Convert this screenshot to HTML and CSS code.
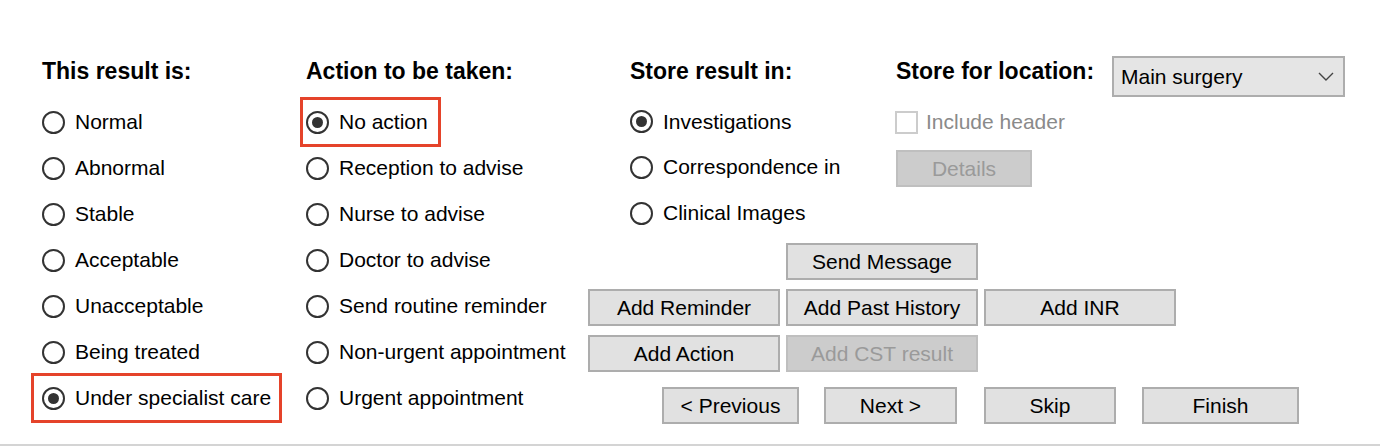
FILE: index.html
```html
<!DOCTYPE html>
<html>
<head>
<meta charset="utf-8">
<title>Result filing</title>
<link rel="stylesheet" href="styles.css">
</head>
<body>
<div class="dialog">
  <div class="col col-result">
    <div class="heading">This result is:</div>
    <label class="radio"><span class="dot"></span>Normal</label>
    <label class="radio"><span class="dot"></span>Abnormal</label>
    <label class="radio"><span class="dot"></span>Stable</label>
    <label class="radio"><span class="dot"></span>Acceptable</label>
    <label class="radio"><span class="dot"></span>Unacceptable</label>
    <label class="radio"><span class="dot"></span>Being treated</label>
    <label class="radio checked hl hl-specialist"><span class="dot"></span>Under specialist care</label>
  </div>
  <div class="col col-action">
    <div class="heading">Action to be taken:</div>
    <label class="radio checked hl hl-action"><span class="dot"></span>No action</label>
    <label class="radio"><span class="dot"></span>Reception to advise</label>
    <label class="radio"><span class="dot"></span>Nurse to advise</label>
    <label class="radio"><span class="dot"></span>Doctor to advise</label>
    <label class="radio"><span class="dot"></span>Send routine reminder</label>
    <label class="radio"><span class="dot"></span>Non-urgent appointment</label>
    <label class="radio"><span class="dot"></span>Urgent appointment</label>
  </div>
  <div class="right">
    <div class="right-top">
      <div class="col col-store">
        <div class="heading">Store result in:</div>
        <label class="radio checked"><span class="dot"></span>Investigations</label>
        <label class="radio"><span class="dot"></span>Correspondence in</label>
        <label class="radio"><span class="dot"></span>Clinical Images</label>
      </div>
      <div class="col col-location">
        <div class="loc-head">
          <div class="heading loc-title">Store for location:</div>
          <div class="select">
            <span>Main surgery</span>
            <svg class="chev" width="16" height="9" viewBox="0 0 16 9"><path d="M1 1 L8 8 L15 1" fill="none" stroke="#444" stroke-width="1.4"/></svg>
          </div>
        </div>
        <label class="check disabled"><span class="box"></span>Include header</label>
        <div class="details-row"><button class="btn disabled details">Details</button></div>
      </div>
    </div>
    <div class="btn-grid">
      <button class="btn g-send">Send Message</button>
      <button class="btn g-reminder">Add Reminder</button>
      <button class="btn g-history">Add Past History</button>
      <button class="btn g-inr">Add INR</button>
      <button class="btn g-action">Add Action</button>
      <button class="btn disabled g-cst">Add CST result</button>
    </div>
    <div class="nav">
      <button class="btn prev">&lt; Previous</button>
      <button class="btn next">Next &gt;</button>
      <button class="btn skip">Skip</button>
      <button class="btn finish">Finish</button>
    </div>
  </div>
</div>
</body>
</html>
```
FILE: styles.css
```css
* { box-sizing: border-box; }
html, body { margin: 0; padding: 0; background: #fff; }
body {
  font-family: "Liberation Sans", Arial, sans-serif;
  font-size: 21px;
  color: #000;
  width: 1380px;
  height: 446px;
  overflow: hidden;
}
.dialog {
  height: 446px;
  border-bottom: 2px solid #d4d4d4;
  padding: 49px 0 0 42px;
  display: flex;
}
.col { display: flex; flex-direction: column; align-items: flex-start; }
.col-result { width: 264px; }
.col-action { width: 282px; }
.right { width: 757px; display: flex; flex-direction: column; }
.right-top { display: flex; padding-left: 42px; height: 187px; }
.col-store { width: 266px; }
.col-location { flex: 1; }

.heading {
  font-weight: bold;
  font-size: 23px;
  height: 50px;
  line-height: 44px;
  white-space: nowrap;
}

.radio {
  height: 46px;
  display: flex;
  align-items: center;
  white-space: nowrap;
}
.radio .dot {
  width: 23px;
  height: 23px;
  border: 2px solid #333;
  border-radius: 50%;
  margin-right: 10px;
  flex: none;
  display: flex;
  align-items: center;
  justify-content: center;
  background: #fff;
}
.radio.checked .dot::after {
  content: "";
  width: 11px;
  height: 11px;
  border-radius: 50%;
  background: #333;
}

.hl { outline: 3px solid #e5432a; outline-offset: -1px; }
.hl-action { margin-left: -4px; padding-left: 4px; padding-right: 11px; }
.hl-specialist { margin-left: -9px; padding-left: 9px; padding-right: 9px; }

.loc-head { display: flex; height: 50px; width: 100%; }
.loc-title { width: 216px; }
.select {
  margin-top: 7px;
  width: 233px;
  height: 41px;
  background: #e5e5e5;
  border: 2px solid #adadad;
  display: flex;
  align-items: center;
  justify-content: space-between;
  padding: 0 9px 0 7px;
  white-space: nowrap;
}

.check {
  height: 46px;
  display: flex;
  align-items: center;
  white-space: nowrap;
  margin-left: -1px;
}
.check .box {
  width: 23px;
  height: 23px;
  border: 2px solid #cccccc;
  background: #fff;
  margin-right: 8px;
  flex: none;
}
.check.disabled { color: #8a8a8a; }

.details-row { margin-top: 5px; }

.btn {
  font: inherit;
  color: #000;
  background: #e1e1e1;
  border: 2px solid #adadad;
  height: 37px;
  padding: 0;
  margin: 0;
  white-space: nowrap;
  display: flex;
  align-items: center;
  justify-content: center;
}
.btn.disabled {
  background: #cccccc;
  border-color: #bfbfbf;
  color: #9a9a9a;
}
.details { width: 136px; }

.btn-grid {
  margin-top: 7px;
  display: grid;
  grid-template-columns: 192px 192px 192px;
  grid-template-rows: 37px 37px 37px;
  column-gap: 6px;
  row-gap: 9px;
}
.g-send { grid-column: 2; grid-row: 1; }
.g-reminder { grid-column: 1; grid-row: 2; }
.g-history { grid-column: 2; grid-row: 2; }
.g-inr { grid-column: 3; grid-row: 2; }
.g-action { grid-column: 1; grid-row: 3; }
.g-cst { grid-column: 2; grid-row: 3; }

.nav {
  margin-top: 15px;
  padding-left: 74px;
  display: flex;
}
.prev { width: 137px; }
.next { width: 133px; margin-left: 25px; }
.skip { width: 132px; margin-left: 27px; }
.finish { width: 157px; margin-left: 26px; }
```
